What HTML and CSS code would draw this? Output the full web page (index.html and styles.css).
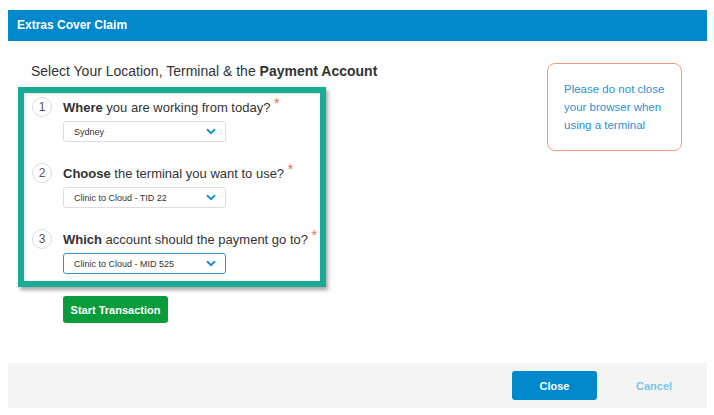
FILE: index.html
```html
<!DOCTYPE html>
<html lang="en">

<head>
    <meta charset="UTF-8">
    <meta name="viewport" content="width=device-width, initial-scale=1.0">
    <title>Extras Cover Claim</title>
    <link rel="stylesheet" href="styles.css">
</head>

<body>
    <div class="modal">
        <div class="modal-header">Extras Cover Claim</div>

        <div class="modal-body">
            <div class="main-col">
                <h2 class="page-title">Select Your Location, Terminal &amp; the <b>Payment Account</b></h2>

                <div class="steps-box">
                    <div class="step">
                        <div class="step-row">
                            <span class="step-num">1</span>
                            <span class="step-label"><b>Where</b> you are working from today? <sup class="req">*</sup></span>
                        </div>
                        <div class="select">
                            <span>Sydney</span>
                            <svg width="10" height="7" viewBox="0 0 10 7"><path d="M1 1.2 L5 5.2 L9 1.2" fill="none" stroke="#1a8fd0" stroke-width="2"/></svg>
                        </div>
                    </div>

                    <div class="step">
                        <div class="step-row">
                            <span class="step-num">2</span>
                            <span class="step-label"><b>Choose</b> the terminal you want to use? <sup class="req">*</sup></span>
                        </div>
                        <div class="select">
                            <span>Clinic to Cloud - TID 22</span>
                            <svg width="10" height="7" viewBox="0 0 10 7"><path d="M1 1.2 L5 5.2 L9 1.2" fill="none" stroke="#1a8fd0" stroke-width="2"/></svg>
                        </div>
                    </div>

                    <div class="step">
                        <div class="step-row">
                            <span class="step-num">3</span>
                            <span class="step-label"><b>Which</b> account should the payment go to? <sup class="req">*</sup></span>
                        </div>
                        <div class="select active">
                            <span>Clinic to Cloud - MID 525</span>
                            <svg width="10" height="7" viewBox="0 0 10 7"><path d="M1 1.2 L5 5.2 L9 1.2" fill="none" stroke="#1a8fd0" stroke-width="2"/></svg>
                        </div>
                    </div>
                </div>

                <button class="btn-start" type="button">Start Transaction</button>
            </div>

            <div class="notice">
                Please do not close<br>
                your browser when<br>
                using a terminal
            </div>
        </div>

        <div class="modal-footer">
            <button class="btn-close" type="button">Close</button>
            <button class="btn-cancel" type="button">Cancel</button>
        </div>
    </div>
</body>

</html>
```

FILE: styles.css
```css
/* Extras Cover Claim modal */
body {
    margin: 0;
    background-color: #fff;
    font-family: "Liberation Sans", Arial, sans-serif;
    color: #333;
}

.modal {
    width: 699px;
    margin: 10px 0 0 8px;
}

.modal-header {
    height: 31px;
    line-height: 30px;
    padding-left: 9px;
    background-color: #0088cc;
    color: #fff;
    font-size: 12px;
    font-weight: bold;
}

.modal-body {
    display: flex;
    padding-top: 22px;
}

.main-col {
    width: 539px;
}

.page-title {
    margin: 0 0 7px 23px;
    font-size: 14px;
    font-weight: normal;
    line-height: 17px;
    color: #333;
}

/* highlighted steps */
.steps-box {
    width: 296px;
    margin-left: 10px;
    padding: 4px 0 7px 0;
    border: 6px solid #1aab94;
    box-shadow: 2px 3px 4px rgba(0, 0, 0, 0.35), inset 1px 1px 3px rgba(0, 0, 0, 0.15);
    background-color: #fff;
}

.step {
    padding-left: 8px;
}

.step + .step {
    margin-top: 21px;
}

.step-row {
    display: flex;
    align-items: center;
    height: 20px;
    white-space: nowrap;
}

.step-num {
    display: flex;
    justify-content: center;
    align-items: center;
    width: 18px;
    height: 18px;
    border: 1px solid #ddd;
    border-radius: 50%;
    font-size: 12px;
    color: #555;
}

.step-label {
    margin-left: 11px;
    font-size: 13px;
    color: #333;
}

.req {
    color: #f26b4a;
    font-size: 14px;
    line-height: 0;
    vertical-align: 4px;
}

.select {
    display: flex;
    justify-content: space-between;
    align-items: center;
    box-sizing: border-box;
    width: 163px;
    height: 21px;
    margin: 4px 0 0 31px;
    padding: 0 9px 0 10px;
    border: 1px solid #ddd;
    border-radius: 3px;
    font-size: 9px;
    color: #333;
}

.select.active {
    border-color: #3a8fc8;
}

.btn-start {
    display: block;
    width: 105px;
    height: 27px;
    margin: 9px 0 0 55px;
    padding: 0;
    background-color: #0a9b3b;
    color: #fff;
    border: none;
    border-radius: 3px;
    font-family: inherit;
    font-size: 11px;
    font-weight: bold;
}

.notice {
    box-sizing: border-box;
    width: 135px;
    height: 88px;
    padding: 16px 0 0 16px;
    border: 1px solid #f5977c;
    border-radius: 8px;
    font-size: 11.5px;
    line-height: 18px;
    color: #2b8fd4;
}

/* footer */
.modal-footer {
    display: flex;
    align-items: center;
    height: 45px;
    margin-top: 40px;
    padding-left: 504px;
    background-color: #f4f4f4;
}

.btn-close {
    width: 85px;
    height: 29px;
    padding: 0;
    background-color: #0088cc;
    color: #fff;
    border: none;
    border-radius: 3px;
    font-family: inherit;
    font-size: 11px;
    font-weight: bold;
}

.btn-cancel {
    margin-left: 39px;
    padding: 0;
    background: none;
    border: none;
    color: #7cc4e8;
    font-family: inherit;
    font-size: 11px;
    font-weight: bold;
}
```
